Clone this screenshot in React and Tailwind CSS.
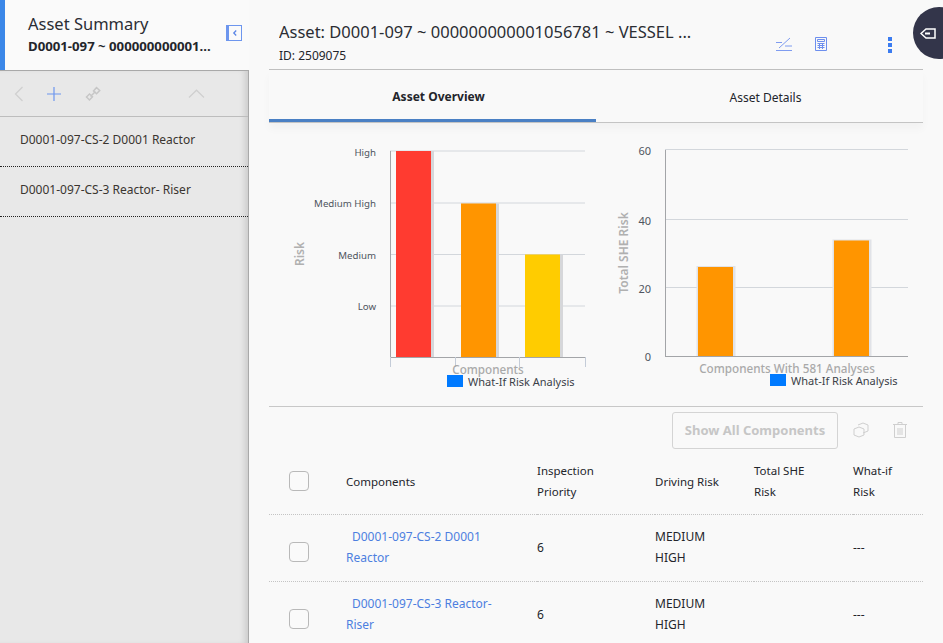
import React from 'react';

const font = { fontFamily: '"Noto Sans", sans-serif' };

function RiskChart() {
  const grid = [151, 203, 254.5, 306];
  const labels = ['High', 'Medium High', 'Medium', 'Low'];
  const bars = [
    { x: 396, top: 151, color: '#ff3b30' },
    { x: 461, top: 203.5, color: '#ff9500' },
    { x: 525, top: 254.5, color: '#ffcc00' },
  ];
  return (
    <svg width="327" height="270" viewBox="269 130 327 270" className="block shrink-0">
      {grid.map((y, i) => (
        <g key={y}>
          <line x1="390" x2="585" y1={y} y2={y} stroke="#d3d7dc" />
          <text x="376" y={i === 0 ? y + 5 : y + 4} textAnchor="end" fontSize="9.7" fill="#4f5560">{labels[i]}</text>
        </g>
      ))}
      {bars.map((b) => (
        <g key={b.x}>
          <rect x={b.x} y={b.top} width="38" height={357 - b.top} fill="#d6d7da" />
          <rect x={b.x} y={b.top} width="35" height={357 - b.top} fill={b.color} />
        </g>
      ))}
      <line x1="390.5" x2="390.5" y1="151" y2="357" stroke="#a3a5a8" />
      <line x1="390" x2="585" y1="357.5" y2="357.5" stroke="#a3a5a8" />
      {[390.5, 455.5, 519.5, 585.5].map((x) => (
        <line key={x} x1={x} x2={x} y1="357" y2="367" stroke="#c4ccd8" />
      ))}
      <text transform="translate(304 254) rotate(-90)" textAnchor="middle" fontSize="12" fontWeight="600" fill="#b0b0b0">Risk</text>
      <text x="488" y="374" textAnchor="middle" fontSize="11.7" fontWeight="500" fill="#a9a9a9">Components</text>
      <rect x="447" y="375" width="16" height="12" fill="#007aff" />
      <text x="468" y="386" fontSize="11" fill="#3b3f48">What-If Risk Analysis</text>
    </svg>
  );
}

function SheChart() {
  const grid = [
    { y: 149.5, label: '60' },
    { y: 219.5, label: '40' },
    { y: 287.5, label: '20' },
  ];
  const bars = [
    { x: 698, top: 267 },
    { x: 834, top: 240.5 },
  ];
  return (
    <svg width="327" height="270" viewBox="596 130 327 270" className="block shrink-0">
      {grid.map((g) => (
        <g key={g.y}>
          <line x1="665" x2="908" y1={g.y} y2={g.y} stroke="#d3d7dc" />
          <text x="651" y={g.y + 5} textAnchor="end" fontSize="11" fill="#4f5560">{g.label}</text>
        </g>
      ))}
      <text x="651" y="361" textAnchor="end" fontSize="11" fill="#4f5560">0</text>
      {bars.map((b) => (
        <g key={b.x}>
          <rect x={b.x - 1.5} y={b.top - 1} width="39" height={356 - b.top + 1} fill="#e1e3e8" />
          <rect x={b.x} y={b.top} width="35" height={356 - b.top} fill="#ff9500" />
        </g>
      ))}
      <line x1="665.5" x2="665.5" y1="150" y2="356" stroke="#a3a5a8" />
      <line x1="665" x2="908" y1="356.5" y2="356.5" stroke="#a3a5a8" />
      <text transform="translate(628 253) rotate(-90)" textAnchor="middle" fontSize="12" fontWeight="600" fill="#b0b0b0">Total SHE Risk</text>
      <text x="787" y="373" textAnchor="middle" fontSize="11.7" fontWeight="500" fill="#a9a9a9">Components With 581 Analyses</text>
      <rect x="770" y="374" width="16" height="12" fill="#007aff" />
      <text x="791" y="385" fontSize="11" fill="#3b3f48">What-If Risk Analysis</text>
    </svg>
  );
}

function Check() {
  return <span className="block h-5 w-5 rounded-[4px] border border-[#b9b9b9] bg-[#fafafa]" />;
}

const rows = [
  { name: 'D0001-097-CS-2 D0001 Reactor' },
  { name: 'D0001-097-CS-3 Reactor- Riser' },
];

export default function App() {
  return (
    <div style={font} className="relative flex h-[643px] w-[943px] overflow-hidden bg-[#f9f9f9] text-[12px] text-[#23252b]">
      {/* sidebar */}
      <aside className="flex w-[249px] shrink-0 flex-col">
        <div className="flex h-[70px] shrink-0 border-l-[5px] border-[#3b87e8] bg-[#fafafa] pl-[23px]">
          <div className="w-[198px] pt-[12px]">
            <div className="text-[16.5px] leading-[23px] text-[#2b2d33]">Asset Summary</div>
            <div className="mt-[2px] truncate text-[13.2px] leading-[18px] font-bold">D0001-097 ~ 000000000001...</div>
          </div>
          <div className="mt-[25px] flex h-4 w-4 items-center justify-center border border-l-[3px] border-[#6d96ee]">
            <svg width="8" height="8" viewBox="0 0 8 8" fill="none" stroke="#5b86e6" strokeWidth="1.3">
              <path d="M5.2 1.5 2.8 4l2.4 2.5" />
            </svg>
          </div>
        </div>
        <div className="flex-1 border-t border-r border-[#a9a9a9] bg-[#e8e8e8] shadow-[inset_-6px_0_6px_-3px_rgba(0,0,0,0.13)]">
          <div className="relative flex h-[46px] items-center border-b border-[#bdbdbd]">
            <svg width="10" height="16" viewBox="0 0 10 16" fill="none" stroke="#cfcfcf" strokeWidth="1.2" className="ml-[14px]">
              <path d="M8.5 1 1.5 8l7 7" />
            </svg>
            <svg width="14" height="14" viewBox="0 0 14 14" fill="none" stroke="#6d96ee" strokeWidth="1.2" className="ml-[23px]">
              <path d="M7 0v14M0 7h14" />
            </svg>
            <svg width="16" height="16" viewBox="0 0 16 16" fill="none" stroke="#c6c6c6" strokeWidth="1.5" className="ml-[24px]">
              <path d="M1.500 11 4.500 8l3 2.800-3 3.200zM8.500 5l3-3.500 3.200 3-3.200 3.300zM5.500 10.500l5-5" />
            </svg>
            <svg width="17" height="9" viewBox="0 0 17 9" fill="none" stroke="#cfcfcf" strokeWidth="1.2" className="ml-[87px]">
              <path d="M1 8.500 8.500 1.200 16 8.500" />
            </svg>
          </div>
          {rows.map((r) => (
            <div key={r.name} className="flex h-[50px] items-center border-b border-dotted border-[#222] pb-[4px] pl-[20px] text-[#3a3530]">
              {r.name}
            </div>
          ))}
        </div>
      </aside>

      {/* main */}
      <main className="ml-[20px] flex w-[654px] shrink-0 flex-col">
        <header className="flex h-[70px] shrink-0 border-b border-[#bfbfbf]">
          <div className="w-[497px] pt-[20px] pl-[10px]">
            <div className="truncate text-[16.5px] leading-[24px] text-[#2b2d33]">Asset: D0001-097 ~ 000000000001056781 ~ VESSEL ...</div>
            <div className="mt-[3px] text-[12px] leading-[18px]">ID: 2509075</div>
          </div>
          <div className="flex pt-[37px]">
            <svg width="16" height="15" viewBox="0 0 16 15" fill="none" stroke="#7f9cf0" strokeWidth="1" className="ml-[10px]">
              <path d="M0 5.500h6M0 13.500h16M3 11 14 1M9 9h7" />
            </svg>
            <svg width="12" height="14" viewBox="0 0 12 14" fill="none" stroke="#6d8fee" strokeWidth="1" className="ml-[23px]">
              <path d="M.5.500h11v13H.500zM2.500 2.500h7v2h-7zM2.500 6.500h7M2.500 8.500h7M2.500 10.500h7M4.500 6v6M7.500 6v6" />
            </svg>
            <div className="ml-[61px] flex flex-col gap-[2px]">
              <span className="block h-[4px] w-[4px] bg-[#3b7cf0]" />
              <span className="block h-[4px] w-[4px] bg-[#3b7cf0]" />
              <span className="block h-[4px] w-[4px] bg-[#3b7cf0]" />
            </div>
          </div>
        </header>

        <nav className="relative flex h-[53px] shrink-0 border-b border-[#c4c4c4] shadow-[0_6px_8px_rgba(0,0,0,0.03)]">
          <div className="flex w-[327px] items-center justify-center border-b-[3px] border-[#4a80c4] pt-[5px] pl-[12px] font-bold">Asset Overview</div>
          <div className="flex flex-1 items-center justify-center pt-[3px] pl-[12px]">Asset Details</div>
        </nav>

        <section className="flex h-[284px] shrink-0 border-b border-[#c8c8c8] pt-[7px]">
          <RiskChart />
          <SheChart />
        </section>

        <div className="flex h-[53px] shrink-0 items-start pt-[5px]">
          <button className="ml-[403px] h-[37px] w-[166px] rounded-[3px] border border-[#d4d4d4] text-[13px] font-bold text-[#c6c6c6]">Show All Components</button>
          <svg width="16" height="16" viewBox="0 0 16 16" fill="none" stroke="#cfcfcf" strokeWidth="1" className="mt-[10px] ml-[15px]">
            <path d="M5 3 10 1l5 2v6l-5 2M1 7l5-2 5 2v6l-5 2-5-2z" />
          </svg>
          <svg width="14" height="16" viewBox="0 0 14 16" fill="none" stroke="#cfcfcf" strokeWidth="1" className="mt-[10px] ml-[24px]">
            <path d="M0 2.500h14M5 2.500V.5h4v2M1.500 2.500v13h11v-13M5 6v7M7 6v7M9 6v7" />
          </svg>
        </div>

        <table className="w-[654px] table-fixed border-collapse text-left leading-[21px]">
          <colgroup>
            <col className="w-[77px]" />
            <col className="w-[191px]" />
            <col className="w-[118px]" />
            <col className="w-[99px]" />
            <col className="w-[99px]" />
            <col className="w-[70px]" />
          </colgroup>
          <thead>
            <tr className="h-[54px] border-b border-dotted border-[#c4c4c4] text-[11.5px]">
              <th className="pb-[12px] pl-[20px] font-normal"><Check /></th>
              <th className="pb-[12px] font-normal">Components</th>
              <th className="pr-[40px] pb-[12px] font-normal">Inspection Priority</th>
              <th className="pb-[12px] font-normal">Driving Risk</th>
              <th className="pr-[30px] pb-[12px] font-normal">Total SHE Risk</th>
              <th className="pr-[10px] pb-[12px] font-normal">What-if Risk</th>
            </tr>
          </thead>
          <tbody>
            {rows.map((r) => (
              <tr key={r.name} className="h-[67px] border-b border-dotted border-[#c4c4c4]">
                <td className="pt-[7px] pl-[20px]"><Check /></td>
                <td className="pr-[36px] pb-[2px] text-[#4d7fe0]"><span className="pl-[6px]">{r.name}</span></td>
                <td className="pb-[2px]">6</td>
                <td className="pr-[30px] pb-[2px]">MEDIUM HIGH</td>
                <td></td>
                <td className="pb-[2px]">---</td>
              </tr>
            ))}
          </tbody>
        </table>
      </main>

      {/* floating button over the corner */}
      <div className="absolute top-[7px] left-[913px] flex h-[52px] w-[52px] items-center rounded-full bg-[#33354a] pl-[7px]">
        <svg width="16" height="11" viewBox="0 0 16 11" fill="none" stroke="#fff" strokeWidth="1.5">
          <path d="M1 5.500 6 1h9v9H6z" />
          <path d="M5 5.500h5" stroke="#fff" strokeWidth="2" />
        </svg>
      </div>
    </div>
  );
}
